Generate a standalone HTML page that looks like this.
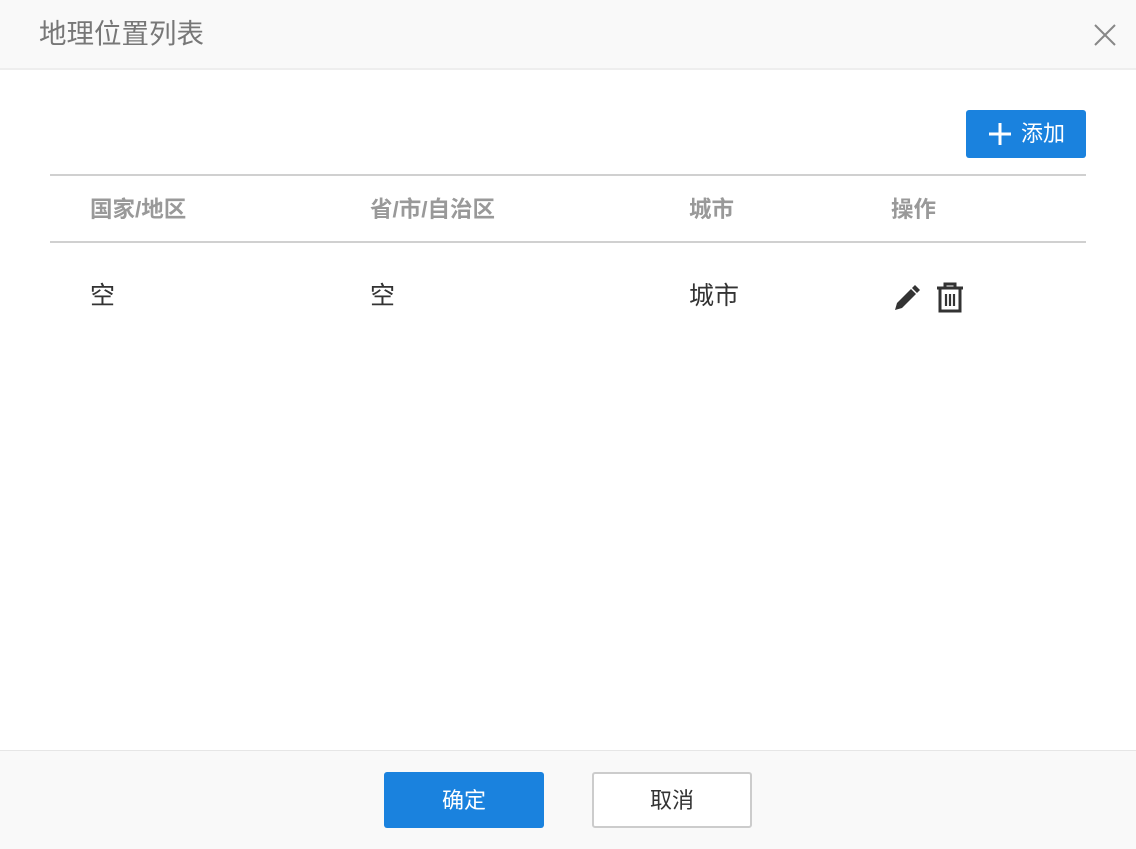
<!DOCTYPE html>
<html><head><meta charset="utf-8"><style>
body{margin:0;width:1136px;height:848px;background:#fff;font-family:"Liberation Sans","Noto Sans CJK SC",sans-serif;position:relative;overflow:hidden}
.hd{position:absolute;left:0;top:0;width:1136px;height:68px;background:#f9f9f9;border-bottom:2px solid #eee}
.hd .t{position:absolute;left:39px;top:17px;font-size:27.5px;color:#777;line-height:34px}
.x{position:absolute;left:1094px;top:24px}
.add{position:absolute;left:966px;top:110px;width:120px;height:48px;background:#1a82de;border-radius:3px;color:#fff;font-size:22px;line-height:48px}
.line{position:absolute;left:50px;width:1036px;height:2px;background:#d0d0d0}
.th{position:absolute;top:195px;font-size:22.5px;font-weight:bold;color:#999;line-height:30px}
.td{position:absolute;top:280px;font-size:25px;color:#333;line-height:32px}
.ft{position:absolute;left:0;top:750px;width:1136px;height:98px;background:#f9f9f9;border-top:1px solid #e6e6e6}
.b{position:absolute;top:772px;height:56px;border-radius:3px;font-size:22px;line-height:58px;text-align:center;box-sizing:border-box}
</style></head><body>
<div class="hd"><div class="t">地理位置列表</div>
<svg class="x" width="22" height="22" viewBox="0 0 22 22"><path d="M1 1L21 21M21 1L1 21" stroke="#888" stroke-width="2"/></svg></div>
<div class="add"><svg style="position:absolute;left:22px;top:12px" width="24" height="24" viewBox="0 0 24 24"><path d="M12 1V23M1 12H23" stroke="#fff" stroke-width="3"/></svg><span style="position:absolute;left:55px">添加</span></div>
<div class="line" style="top:174px"></div>
<div class="line" style="top:241px"></div>
<div class="th" style="left:90px">国家/地区</div>
<div class="th" style="left:370px">省/市/自治区</div>
<div class="th" style="left:689px">城市</div>
<div class="th" style="left:891px">操作</div>
<div class="td" style="left:90px">空</div>
<div class="td" style="left:370px">空</div>
<div class="td" style="left:689px">城市</div>
<svg style="position:absolute;left:893px;top:284px" width="28" height="28" viewBox="0 0 28 28"><path d="M2 26L4 19L18 5L23 10L9 24Z" fill="#333"/><path d="M19 4L22 1L27 6L24 9Z" fill="#333"/></svg>
<svg style="position:absolute;left:935px;top:282px" width="30" height="32" viewBox="0 0 30 32"><path d="M2 6H28M10 6V2H20V6M5 7V29H25V7" fill="none" stroke="#333" stroke-width="3"/><path d="M11 12V24M15 12V24M19 12V24" stroke="#333" stroke-width="2.2"/></svg>
<div class="ft"></div>
<div class="b" style="left:384px;width:160px;background:#1a82de;color:#fff">确定</div>
<div class="b" style="left:592px;width:160px;background:#fff;border:2px solid #ccc;color:#333;line-height:54px">取消</div>
</body></html>
